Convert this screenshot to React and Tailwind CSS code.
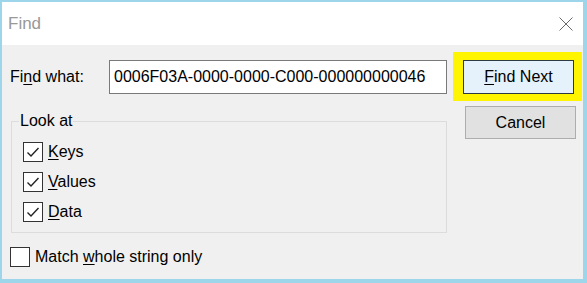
import React from "react";

const Check = ({ checked }) => (
  <div className="w-[20px] h-[20px] border border-[#333] bg-white flex items-center justify-center shrink-0">
    {checked && (
      <svg width="16" height="16" viewBox="0 0 16 16">
        <polyline points="2.5,8.5 6,12 13.5,4" fill="none" stroke="#222" strokeWidth="1.4" />
      </svg>
    )}
  </div>
);

const CheckRow = ({ checked, ul, rest }) => (
  <div className="flex items-center h-[20px]">
    <Check checked={checked} />
    <span className="ml-[5px]">
      <span className="underline underline-offset-2">{ul}</span>
      {rest}
    </span>
  </div>
);

export default function App() {
  return (
    <div
      className="w-[587px] h-[283px] bg-[#9dd6ea] pl-[2px] pt-[2px] pr-[4px] pb-[4px] flex flex-col text-[16px] text-black leading-none"
      style={{ fontFamily: '"Liberation Sans", Arial, sans-serif' }}
    >
      <div className="h-[43px] bg-white flex items-center justify-between pl-[6px] pr-[10px] shrink-0">
        <span className="text-[#999] text-[17px]">Find</span>
        <svg width="14" height="14" viewBox="0 0 14 14">
          <line x1="0.5" y1="0.5" x2="13.5" y2="13.5" stroke="#6b6b6b" strokeWidth="1" />
          <line x1="13.5" y1="0.5" x2="0.5" y2="13.5" stroke="#6b6b6b" strokeWidth="1" />
        </svg>
      </div>

      <div className="flex-1 bg-[#f0f0f0] flex">
        <div className="w-[445px] flex flex-col">
          <div className="flex items-center mt-[15px] h-[34px] pl-[8px]">
            <span className="w-[99px]">
              Fi<span className="underline underline-offset-2">n</span>d what:
            </span>
            <div className="flex-1 h-[34px] border border-[#7a7a7a] bg-white flex items-center pl-[4px]">
              0006F03A-0000-0000-C000-000000000046
            </div>
          </div>

          <div className="relative ml-[9px] mt-[27px] h-[112px] border border-[#dcdcdc]">
            <span className="absolute -top-[9px] left-[7px] px-[1px] bg-[#f0f0f0]">Look at</span>
            <div className="flex flex-col gap-[10px] pl-[11px] pt-[20px]">
              <CheckRow checked ul="K" rest="eys" />
              <CheckRow checked ul="V" rest="alues" />
              <CheckRow checked ul="D" rest="ata" />
            </div>
          </div>

          <div className="flex items-center mt-[14px] pl-[8px] h-[20px]">
            <Check checked={false} />
            <span className="ml-[5px]">
              Match <span className="underline underline-offset-2">w</span>hole string only
            </span>
          </div>
        </div>

        <div className="ml-[6px] pt-[7px] flex flex-col">
          <div className="w-[129px] h-[49px] bg-[#fff500] pl-[10px] pt-[8px]">
            <div className="w-[111px] h-[34px] border border-[#2d3a46] bg-[#e5f1fb] flex items-center justify-center">
              <span>
                <span className="underline underline-offset-2">F</span>ind Next
              </span>
            </div>
          </div>
          <div className="ml-[12px] mt-[5px] w-[111px] h-[33px] border border-[#adadad] bg-[#e1e1e1] flex items-center justify-center">
            Cancel
          </div>
        </div>
      </div>
    </div>
  );
}
